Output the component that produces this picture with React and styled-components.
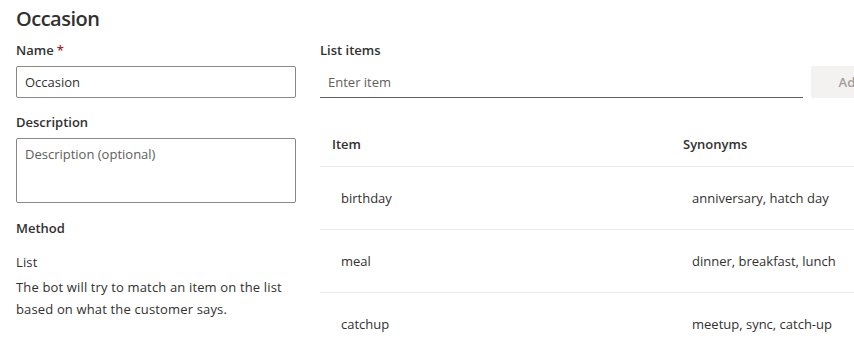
import React from "react";
import styled, { createGlobalStyle } from "styled-components";

const GlobalStyle = createGlobalStyle`
  body {
    margin: 0;
    background: #ffffff;
    font-family: "Open Sans", "Noto Sans", sans-serif;
    color: #323130;
  }
  * { box-sizing: border-box; }
`;

export const Page = styled.div`
  width: 854px;
  height: 349px;
  overflow: hidden;
  display: flex;
  gap: 24px;
  padding-left: 16px;
`;

export const LeftColumn = styled.div`
  width: 280px;
  flex: none;
  display: flex;
  flex-direction: column;
`;

export const RightColumn = styled.div`
  width: 640px;
  flex: none;
  padding-top: 40px;
  display: flex;
  flex-direction: column;
`;

export const Title = styled.h2`
  margin: 5px 0 0;
  font-size: 20px;
  line-height: 28px;
  font-weight: 600;
  letter-spacing: -0.5px;
`;

export const Label = styled.div`
  font-size: 13px;
  line-height: 20px;
  font-weight: 600;
  margin-top: ${(p) => p.$top || 0}px;
`;

export const Required = styled.span`
  color: #a4262c;
  margin-left: 3px;
`;

export const TextBox = styled.div`
  margin-top: 6px;
  height: ${(p) => p.$height || 32}px;
  border: 1px solid #8a8886;
  border-radius: 2px;
  padding: ${(p) => (p.$multi ? "6px 8px" : "0 8px")};
  display: flex;
  align-items: ${(p) => (p.$multi ? "flex-start" : "center")};
  font-size: 13px;
  color: ${(p) => (p.$placeholder ? "#605e5c" : "#323130")};
`;

export const Text = styled.div`
  font-size: 13px;
  line-height: 22px;
  letter-spacing: 0.15px;
  margin-top: ${(p) => p.$top || 0}px;
`;

export const AddRow = styled.div`
  margin-top: 6px;
  display: flex;
  gap: 8px;
`;

export const UnderlineInput = styled.div`
  width: 483px;
  height: 32px;
  border-bottom: 1px solid #605e5c;
  padding: 0 8px;
  display: flex;
  align-items: center;
  font-size: 13px;
  color: #605e5c;
`;

export const AddButton = styled.div`
  width: 80px;
  height: 32px;
  border-radius: 2px;
  background: #f3f2f1;
  color: #a19f9d;
  font-size: 13px;
  font-weight: 600;
  display: flex;
  align-items: center;
  justify-content: center;
`;

export const Table = styled.div`
  margin-top: 24px;
  width: 534px;
`;

export const Row = styled.div`
  display: grid;
  grid-template-columns: 351px 1fr;
  height: ${(p) => (p.$header ? 45 : 63)}px;
  align-items: center;
  border-bottom: 1px solid #edebe9;
  font-size: 13px;
  font-weight: ${(p) => (p.$header ? 600 : 400)};
`;

export const Cell = styled.div`
  padding-left: ${(p) => (p.$header ? 12 : 21)}px;
  white-space: nowrap;
`;

const items = [
  { item: "birthday", synonyms: "anniversary, hatch day" },
  { item: "meal", synonyms: "dinner, breakfast, lunch" },
  { item: "catchup", synonyms: "meetup, sync, catch-up" },
];

export default function App() {
  return (
    <>
      <GlobalStyle />
      <Page>
        <LeftColumn>
          <Title>Occasion</Title>
          <Label $top={7}>
            Name<Required>*</Required>
          </Label>
          <TextBox>Occasion</TextBox>
          <Label $top={14}>Description</Label>
          <TextBox $multi $placeholder $height={65}>
            Description (optional)
          </TextBox>
          <Label $top={15}>Method</Label>
          <Text $top={13}>List</Text>
          <Text $top={3}>
            The bot will try to match an item on the list based on what the
            customer says.
          </Text>
        </LeftColumn>
        <RightColumn>
          <Label>List items</Label>
          <AddRow>
            <UnderlineInput>Enter item</UnderlineInput>
            <AddButton>Add</AddButton>
          </AddRow>
          <Table>
            <Row $header>
              <Cell $header>Item</Cell>
              <Cell $header>Synonyms</Cell>
            </Row>
            {items.map((r) => (
              <Row key={r.item}>
                <Cell>{r.item}</Cell>
                <Cell>{r.synonyms}</Cell>
              </Row>
            ))}
          </Table>
        </RightColumn>
      </Page>
    </>
  );
}
